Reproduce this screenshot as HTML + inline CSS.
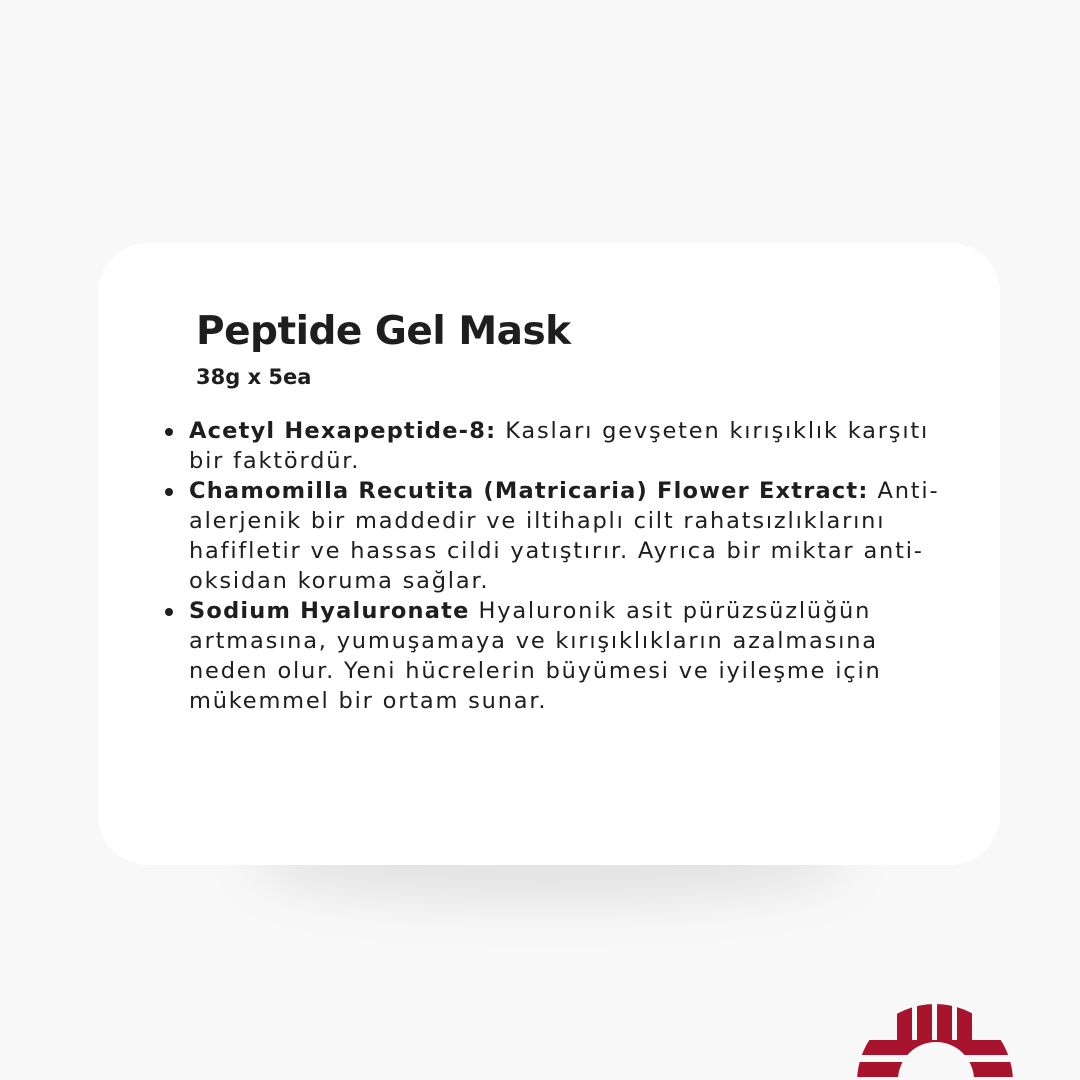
<!DOCTYPE html>
<html><head><meta charset="utf-8"><style>
html,body{margin:0;padding:0}
body{width:1080px;height:1080px;background:#f8f8f8;position:relative;overflow:hidden;font-family:"DejaVu Sans","Liberation Sans",sans-serif;color:#1e1e1e}
.shadow{position:absolute;left:250px;top:820px;width:600px;height:80px;border-radius:50%;background:rgba(0,0,0,0.09);filter:blur(25px)}
.card{position:absolute;left:98px;top:243px;width:902px;height:622px;background:#fff;border-radius:50px}
h1{position:absolute;left:196px;top:306px;margin:0;font-family:"DejaVu Sans",sans-serif;font-size:39px;font-weight:bold;letter-spacing:-0.5px;line-height:52px}
.sub{position:absolute;left:196px;top:362px;font-size:21px;font-weight:bold;line-height:30px}
.list{position:absolute;left:189px;top:416px;font-size:22.5px;line-height:30px;letter-spacing:1.8px;white-space:nowrap}
.list b{letter-spacing:1.2px}
.dot{position:absolute;left:-24px;width:8px;height:8px;border-radius:50%;background:#1e1e1e}
.item{position:relative}
</style></head><body>
<div class="shadow"></div>
<div class="card"></div>
<h1>Peptide Gel Mask</h1>
<div class="sub">38g x 5ea</div>
<div class="list">
<div class="item"><span class="dot" style="top:12px"></span><b>Acetyl Hexapeptide-8:</b> Kasları gevşeten kırışıklık karşıtı<br>bir faktördür.</div>
<div class="item"><span class="dot" style="top:12px"></span><b>Chamomilla Recutita (Matricaria) Flower Extract:</b> Anti-<br>alerjenik bir maddedir ve iltihaplı cilt rahatsızlıklarını<br>hafifletir ve hassas cildi yatıştırır. Ayrıca bir miktar anti-<br>oksidan koruma sağlar.</div>
<div class="item"><span class="dot" style="top:12px"></span><b>Sodium Hyaluronate</b> Hyaluronik asit pürüzsüzlüğün<br>artmasına, yumuşamaya ve kırışıklıkların azalmasına<br>neden olur. Yeni hücrelerin büyümesi ve iyileşme için<br>mükemmel bir ortam sunar.</div>
</div>
<svg style="position:absolute;left:0;top:0" width="1080" height="1080">
<defs><clipPath id="c"><circle cx="935" cy="1082" r="78"/></clipPath></defs>
<g clip-path="url(#c)" fill="#a8142e">
<rect x="897" y="995" width="15" height="60"/>
<rect x="917" y="995" width="15" height="60"/>
<rect x="937" y="995" width="15" height="60"/>
<rect x="957" y="995" width="15" height="60"/>
<rect x="850" y="1040" width="170" height="15"/>
<rect x="850" y="1062" width="170" height="15"/>
</g>
<circle cx="936" cy="1080" r="38" fill="#f8f8f8"/>
</svg>
</body></html>
